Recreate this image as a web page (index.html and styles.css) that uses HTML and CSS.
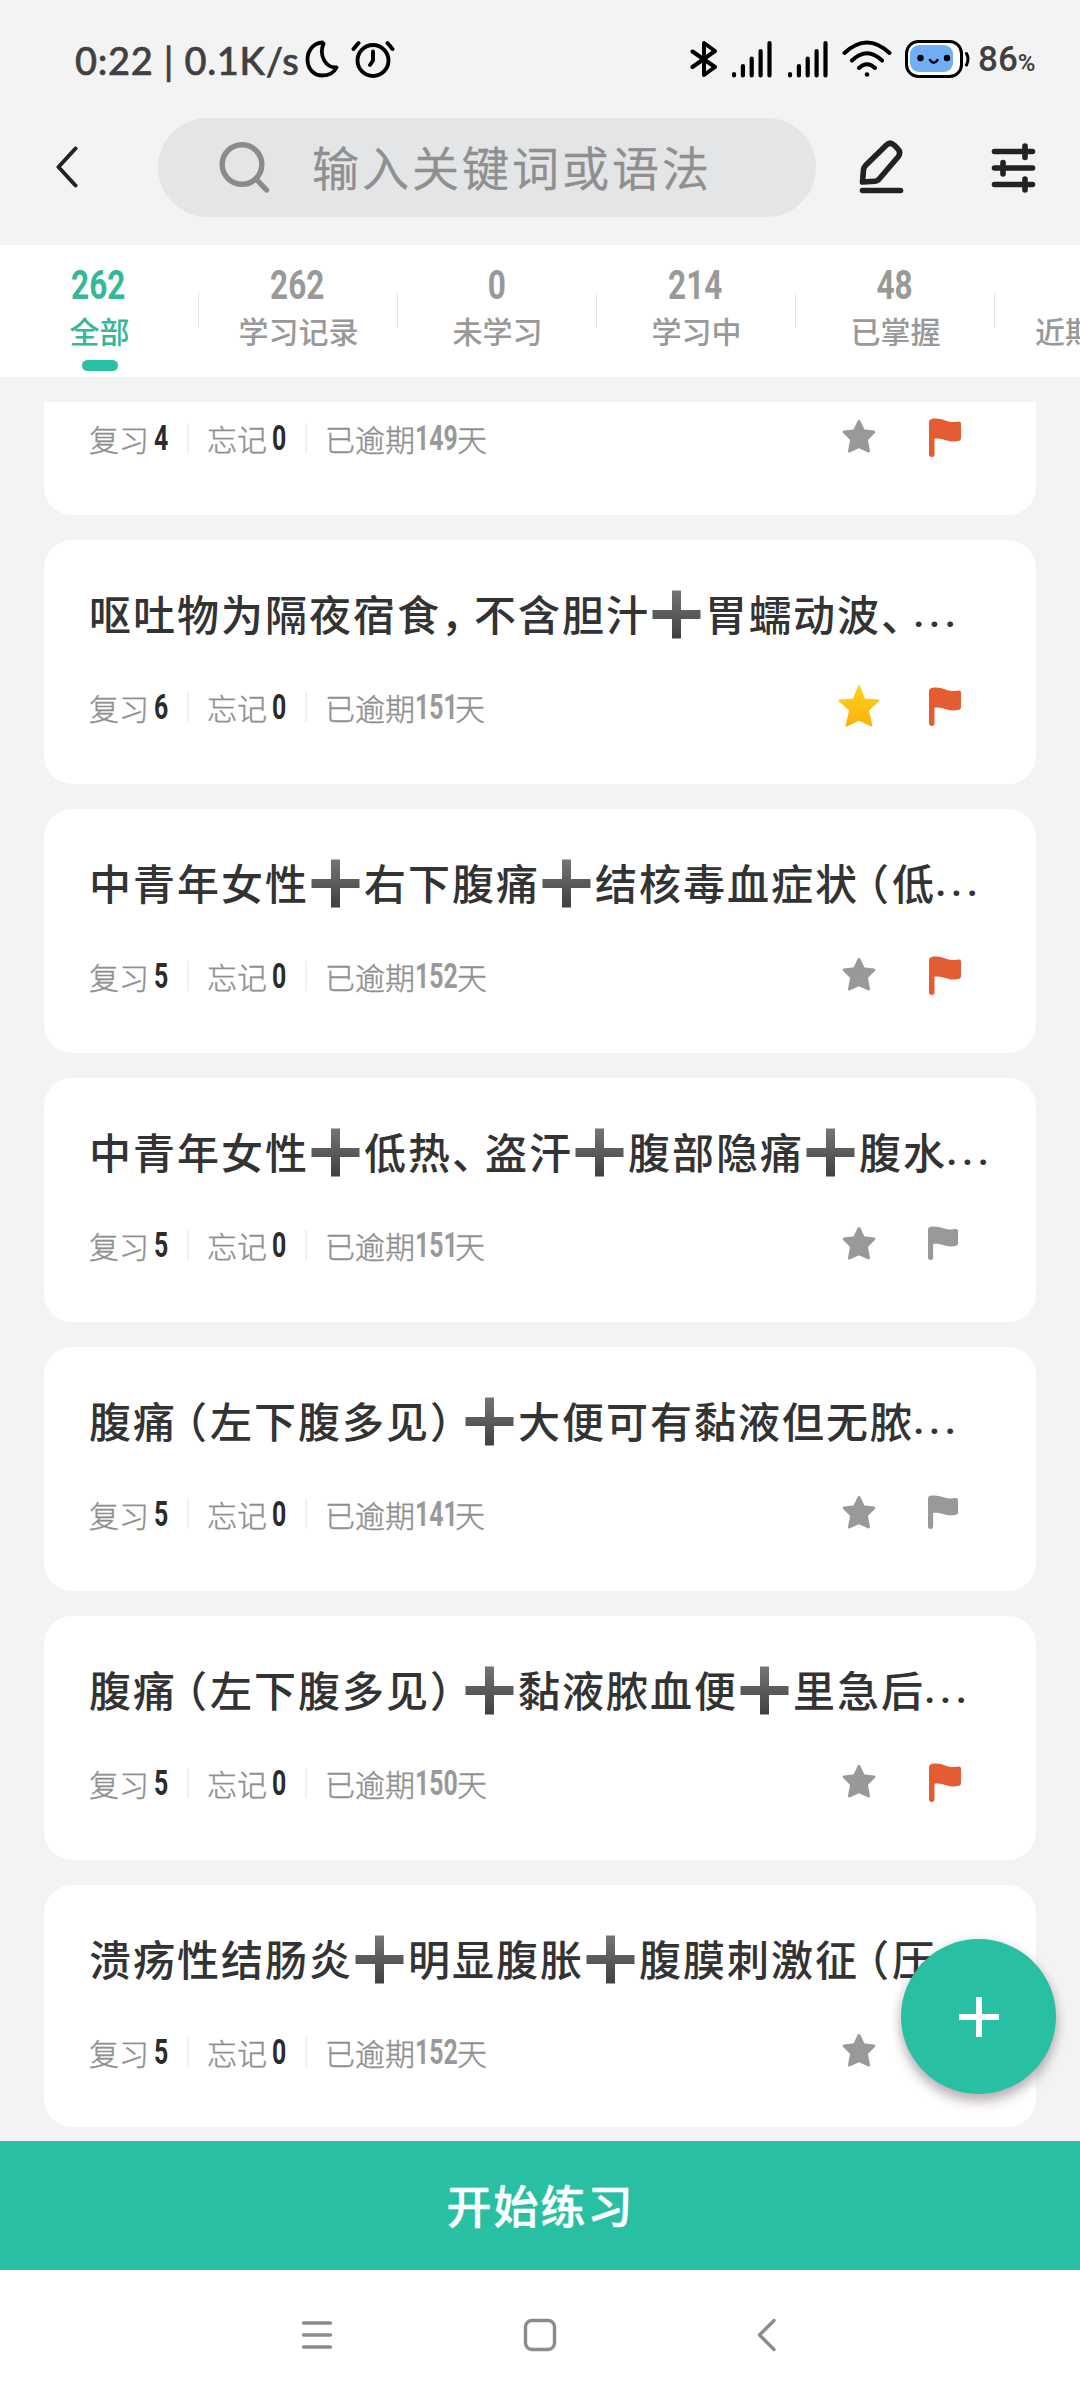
FILE: index.html
```html
<!DOCTYPE html>
<html lang="zh-CN">
<head>
<meta charset="utf-8">
<title>学习记录</title>
<link rel="stylesheet" href="styles.css">
</head>
<body>
<svg class="defs" width="0" height="0">
  <defs>
    <linearGradient id="plusFill" x1="0" y1="0" x2="0" y2="1"><stop offset="0" stop-color="#757575"/><stop offset="1" stop-color="#404040"/></linearGradient>
    <linearGradient id="goldFill" x1="0" y1="0" x2="0" y2="1"><stop offset="0" stop-color="#fdd31a"/><stop offset="1" stop-color="#fdb10c"/></linearGradient>
    <symbol id="plus" viewBox="0 0 49 49"><path d="M20 .5h9v19.500h19.500v9H29v19.500h-9V29H.5v-9H20z" fill="url(#plusFill)"/></symbol>
    <symbol id="star" viewBox="0 0 44 44"><path d="M22 7.500l4.300 9.200 10.500 1.200-7.500 7.500 2.200 11.600L22 32.600 12.500 37l2.200-11.600-7.500-7.500 10.500-1.200z" fill="#999" stroke="#999" stroke-width="3" stroke-linejoin="round"/></symbol>
    <symbol id="gold" viewBox="0 0 44 44"><path d="M22 3l5.300 13.600 14.200 1-10.700 9.600 3.700 15.300L22 36.500 9.500 42.500l3.700-15.300L2.500 17.600l14.200-1z" fill="url(#goldFill)" stroke="url(#goldFill)" stroke-width="2" stroke-linejoin="round"/></symbol>
    <symbol id="flag" viewBox="0 0 32 39" preserveAspectRatio="none"><path d="M0 4Q0 1.500 2.500 1C13-1.500 18 6 29 3.500Q32 3 32 5.500V20Q32 22.500 29 23C18 25 14 19 5.500 20.700V36.200a2.700 2.700 0 0 1-5.500 0z" fill="currentColor"/></symbol>
  </defs>
</svg>
<div class="screen">
  <header class="status">
    <span class="clock">0:22 | 0.1K/s</span>
    <svg class="moon" width="34" height="38" viewBox="0 0 34 38"><path d="M17.500 2.500C8 3 2.500 11 2.500 19.500 2.500 29 9 35.500 17.500 35.500 24 35.500 29 32.500 31.500 27.500 21 28 13.500 16 18.500 3.500z" fill="none" stroke="#000" stroke-width="3.800" stroke-linejoin="round" stroke-linecap="round"/></svg>
    <svg class="alarm" width="44" height="38" viewBox="0 0 44 38" fill="none" stroke="#000" stroke-width="3.900" stroke-linecap="round" stroke-linejoin="round"><circle cx="22" cy="20.500" r="15.500"/><path d="M22 11.500v9l-3 4.500M2.500 9l5-6M41.500 9l-5-6"/></svg>
    <div class="status-right">
      <svg class="bt" width="28" height="38" viewBox="0 0 28 38"><path d="M2.500 11.500L25 27 14 35V3l11 8L2.500 27" fill="none" stroke="#000" stroke-width="4" stroke-linecap="round" stroke-linejoin="round"/></svg>
      <svg class="sig" width="42" height="38" viewBox="0 0 42 38"><path d="M3 34v1.500M11.900 26v9.500M20.700 18.500v17M29.600 11v24.500M38.500 3v32.500" fill="none" stroke="#000" stroke-width="4.200" stroke-linecap="round"/></svg>
      <svg class="sig" width="42" height="38" viewBox="0 0 42 38"><path d="M3 34v1.500M11.900 26v9.500M20.700 18.500v17M29.600 11v24.500M38.500 3v32.500" fill="none" stroke="#000" stroke-width="4.200" stroke-linecap="round"/></svg>
      <svg class="wifi" width="50" height="38" viewBox="0 0 50 38"><path d="M2.500 13Q25-8 47.500 13M10 20.500Q25 6 40 20.500M17 28Q25 20.500 33 28" fill="none" stroke="#000" stroke-width="4" stroke-linecap="round"/><circle cx="25" cy="34.500" r="2.300"/></svg>
      <svg class="batt" width="66" height="38" viewBox="0 0 66 38"><rect x="1.500" y="1.500" width="55" height="35" rx="12" fill="#fff" stroke="#000" stroke-width="3"/><rect x="5" y="5" width="43" height="27" rx="9" fill="#70aef5"/><circle cx="15.500" cy="18" r="3.200"/><circle cx="42" cy="18" r="3.200"/><path d="M25 20q3.800 5.500 7.500 0" fill="none" stroke="#000" stroke-width="2.500" stroke-linecap="round"/><path d="M61.500 13.500q3 5.500 0 11.500" fill="none" stroke="#000" stroke-width="3" stroke-linecap="round"/></svg>
      <span class="percent">86<small>%</small></span>
    </div>
  </header>

  <div class="topbar">
    <svg class="back" width="22" height="42" viewBox="0 0 22 42"><path d="M19.500 2.500L2.500 21l17 18.500" fill="none" stroke="#222" stroke-width="4" stroke-linecap="round" stroke-linejoin="round"/></svg>
    <div class="search">
      <svg width="52" height="52" viewBox="0 0 52 52" fill="none" stroke="#8b8b8d" stroke-width="5.400" stroke-linecap="round"><circle cx="23" cy="22.500" r="19.800"/><path d="M38 38l9.500 10"/></svg>
      <span>输入关键词或语法</span>
    </div>
    <svg class="edit" width="46" height="54" viewBox="0 0 46 54" fill="none" stroke="#222" stroke-width="5.600" stroke-linecap="round" stroke-linejoin="round"><path d="M3.500 42l1-12.500Q5 27 7 25L27.500 5q3.500-3.500 7.500 0l3.500 3.500q4 4 .5 8.500L21 38q-2 3-5 3.200z"/><path d="M3.500 50.500h38"/></svg>
    <svg class="tune" width="46" height="54" viewBox="0 0 46 54" fill="none" stroke="#222" stroke-width="5.600" stroke-linecap="round"><path d="M3.500 11.500h38M3.500 28h38M3.500 44.500h38M34 6v11.500M12 22.500v11.500M34 39v11"/></svg>
  </div>

  <nav class="tabs">
    <div class="tab active"><b>262</b><span>全部</span><i></i></div>
    <div class="tab"><b>262</b><span>学习记录</span></div>
    <div class="tab"><b>0</b><span>未学习</span></div>
    <div class="tab"><b>214</b><span>学习中</span></div>
    <div class="tab"><b>48</b><span>已掌握</span></div>
    <div class="tab cut"><span>近期</span></div>
  </nav>

  <main class="list">
    <article class="card first">
      <div class="meta"><span>复习</span><b>4</b><hr><span>忘记</span><b>0</b><hr><span>已逾期</span><em class="wide">149</em><span>天</span><svg class="star"><use href="#star"/></svg><svg class="flag red"><use href="#flag"/></svg></div>
    </article>
    <article class="card">
      <h2>呕吐物为隔夜宿食<span class="pl">，</span>不含胆汁<svg><use href="#plus"/></svg>胃蠕动波<span class="pl">、</span><span class="dots">...</span></h2>
      <div class="meta"><span>复习</span><b>6</b><hr><span>忘记</span><b>0</b><hr><span>已逾期</span><em>151</em><span>天</span><svg class="star"><use href="#gold"/></svg><svg class="flag red"><use href="#flag"/></svg></div>
    </article>
    <article class="card">
      <h2>中青年女性<svg><use href="#plus"/></svg>右下腹痛<svg><use href="#plus"/></svg>结核毒血症状<span class="pr">（</span>低<span class="dots">...</span></h2>
      <div class="meta"><span>复习</span><b>5</b><hr><span>忘记</span><b>0</b><hr><span>已逾期</span><em class="wide">152</em><span>天</span><svg class="star"><use href="#star"/></svg><svg class="flag red"><use href="#flag"/></svg></div>
    </article>
    <article class="card">
      <h2>中青年女性<svg><use href="#plus"/></svg>低热<span class="pl">、</span>盗汗<svg><use href="#plus"/></svg>腹部隐痛<svg><use href="#plus"/></svg>腹水<span class="dots">...</span></h2>
      <div class="meta"><span>复习</span><b>5</b><hr><span>忘记</span><b>0</b><hr><span>已逾期</span><em>151</em><span>天</span><svg class="star"><use href="#star"/></svg><svg class="flag"><use href="#flag"/></svg></div>
    </article>
    <article class="card">
      <h2>腹痛<span class="pr">（</span>左下腹多见<span class="pl">）</span><svg><use href="#plus"/></svg>大便可有黏液但无脓<span class="dots">...</span></h2>
      <div class="meta"><span>复习</span><b>5</b><hr><span>忘记</span><b>0</b><hr><span>已逾期</span><em>141</em><span>天</span><svg class="star"><use href="#star"/></svg><svg class="flag"><use href="#flag"/></svg></div>
    </article>
    <article class="card">
      <h2>腹痛<span class="pr">（</span>左下腹多见<span class="pl">）</span><svg><use href="#plus"/></svg>黏液脓血便<svg><use href="#plus"/></svg>里急后<span class="dots">...</span></h2>
      <div class="meta"><span>复习</span><b>5</b><hr><span>忘记</span><b>0</b><hr><span>已逾期</span><em class="wide">150</em><span>天</span><svg class="star"><use href="#star"/></svg><svg class="flag red"><use href="#flag"/></svg></div>
    </article>
    <article class="card last">
      <h2>溃疡性结肠炎<svg><use href="#plus"/></svg>明显腹胀<svg><use href="#plus"/></svg>腹膜刺激征<span class="pr">（</span>压</h2>
      <div class="meta"><span>复习</span><b>5</b><hr><span>忘记</span><b>0</b><hr><span>已逾期</span><em class="wide">152</em><span>天</span><svg class="star"><use href="#star"/></svg></div>
    </article>
  </main>

  <button class="start">开始练习</button>

  <footer class="sysnav">
    <svg width="32" height="34" viewBox="0 0 32 34"><path d="M2.500 5h27M2.500 17h27M2.500 29h27" stroke="#8c8c8c" stroke-width="3.400" stroke-linecap="round"/></svg>
    <svg class="home" width="34" height="34" viewBox="0 0 34 34"><rect x="2.500" y="2.500" width="29" height="29" rx="6.500" fill="none" stroke="#8c8c8c" stroke-width="3.400"/></svg>
    <svg width="20" height="34" viewBox="0 0 20 34"><path d="M17 2.500L2.500 17 17 31.500" fill="none" stroke="#8c8c8c" stroke-width="3.400" stroke-linecap="round" stroke-linejoin="round"/></svg>
  </footer>

  <button class="fab" aria-label="添加"><svg width="40" height="40" viewBox="0 0 40 40"><path d="M20 0v40M0 20h40" stroke="#fff" stroke-width="6"/></svg></button>
</div>
</body>
</html>
```
FILE: styles.css
```css
* { box-sizing: border-box; }
body {
  margin: 0;
  background: #f3f3f3;
  font-family: "Noto Sans CJK SC", sans-serif;
  color: #333;
}
button { border: 0; padding: 0; font: inherit; }
svg { display: block; flex: none; }
.defs { position: absolute; }
.screen {
  position: relative;
  width: 1080px;
  height: 2400px;
  display: flex;
  flex-direction: column;
  overflow: hidden;
}

/* system status bar */
.status {
  display: flex;
  height: 118px;
  padding: 40px 44px 0 75px;
  color: #404040;
  font-family: Lato, sans-serif;
}
.clock {
  width: 229px;
  font-size: 38px;
  line-height: 40px;
  font-weight: 500;
  letter-spacing: .7px;
  white-space: pre;
  -webkit-text-stroke: .6px currentColor;
}
.moon { margin-left: 1px; }
.alarm { margin-left: 12px; }
.status-right { display: flex; margin-left: auto; }
.bt { margin-right: 13px; }
.sig { margin-right: 14px; }
.wifi { margin: 0 13px 0 -1px; }
.percent { width: 58px; margin-left: 7px; font: 500 35px/40px Roboto, sans-serif; white-space: nowrap; }
.percent small { font-size: 24px; font-weight: 600; }

/* search header */
.topbar { display: flex; height: 127px; padding: 0 43px 0 56px; }
.back { margin-top: 28px; }
.search {
  display: flex;
  align-items: center;
  width: 658px;
  height: 99px;
  margin-left: 80px;
  padding-left: 61px;
  border-radius: 50px;
  background: #e4e5e6;
  color: #8f8f8f;
  font-size: 47px;
  font-weight: 350;
  letter-spacing: 3px;
  -webkit-text-stroke: .5px currentColor;
}
.search span { margin: -4px 0 0 41px; white-space: nowrap; }
.edit { margin: 22px 0 0 43px; }
.tune { margin: 22px 0 0 auto; }

/* category tabs */
.tabs { display: flex; height: 132px; background: #fff; overflow: hidden; }
.tab {
  flex: 0 0 199px;
  display: flex;
  flex-direction: column;
  align-items: center;
  padding-top: 20px;
  color: #999;
  background: linear-gradient(#e4e4e4, #e4e4e4) no-repeat 100% 48px / 1px 35px;
}
.tab b { font: 700 41px/40px Roboto, sans-serif; transform: translateX(-1px) scaleX(.77); }
.tab span { margin-top: 3px; font-size: 30px; line-height: 44px; font-weight: 500; white-space: nowrap; }
.tab i { width: 36px; height: 11px; margin-top: 8px; border-radius: 6px; background: #29bfa2; }
.tab.active { color: #35b799; }
.tab.cut { align-items: flex-start; padding: 60px 0 0 40px; background: none; }

/* card list */
.list {
  flex: none;
  display: flex;
  flex-direction: column;
  gap: 25px;
  height: 1725px;
  margin: 25px 44px 0;
  overflow: hidden;
}
.card {
  flex: none;
  height: 244px;
  padding: 40px 0 0 45px;
  border-radius: 28px;
  background: #fff;
}
.card.first { height: 113px; padding-top: 0; border-radius: 0 0 28px 28px; }
.card.last { height: 242px; }
.card h2 {
  display: flex;
  align-items: center;
  height: 64px;
  margin: 0;
  font-size: 42px;
  font-weight: 500;
  letter-spacing: 2px;
  white-space: nowrap;
}
.card h2 svg { width: 49px; height: 49px; margin: 4px 4px 0 2px; }
.pl, .pr { font-feature-settings: "halt"; }
.pl { padding-right: 10px; }
.pr { padding: 0 1px 0 9px; }
.dots { margin-left: -1px; font-family: Roboto, sans-serif; letter-spacing: 4px; }
.meta {
  display: flex;
  align-items: center;
  height: 44px;
  margin-top: 41px;
  color: #8f8f8f;
  font-size: 30px;
  font-weight: 300;
  line-height: 44px;
}
.meta span { -webkit-text-stroke: .4px currentColor; }
.first .meta { margin-top: 14px; }
.meta b, .meta em {
  padding-top: 2px;
  font: 700 35px/44px Roboto, sans-serif;
  transform: scaleX(.71);
  transform-origin: 0 50%;
}
.meta b { width: 14px; margin-left: 5px; color: #2b2b2b; }
.meta em { width: 40px; color: #999; }
.meta em.wide { width: 42px; }
.meta hr { width: 2px; height: 30px; margin: 0 18px 0 19px; border: 0; background: #f0f0f0; }
.star { width: 44px; height: 44px; margin: -5px 0 0 auto; }
.flag { width: 30px; height: 34px; margin: -4px 78px 0 47px; color: #999; }
.flag.red { width: 32px; height: 39px; margin: -1px 75px 0 48px; color: #e45c31; }
.last .star { margin-right: 155px; }

.start {
  flex: none;
  height: 129px;
  margin-top: 14px;
  padding: 0 0 2px 1px;
  background: #29bfa2;
  color: #fff;
  font-size: 45px;
  font-weight: 500;
  letter-spacing: 2px;
  -webkit-text-stroke: .5px currentColor;
}
.sysnav {
  display: flex;
  flex: 1;
  align-items: flex-start;
  padding: 48px 303px 0 301px;
  background: #fff;
  justify-content: space-between;
}
.sysnav .home { margin-right: 10px; }
.fab {
  position: absolute;
  left: 901px;
  top: 1939px;
  width: 155px;
  height: 155px;
  display: flex;
  align-items: center;
  justify-content: center;
  border-radius: 50%;
  background: #29bfa2;
  box-shadow: 0 8px 12px rgba(60, 30, 50, .3), 0 1px 12px rgba(0, 0, 0, .1);
}
```
